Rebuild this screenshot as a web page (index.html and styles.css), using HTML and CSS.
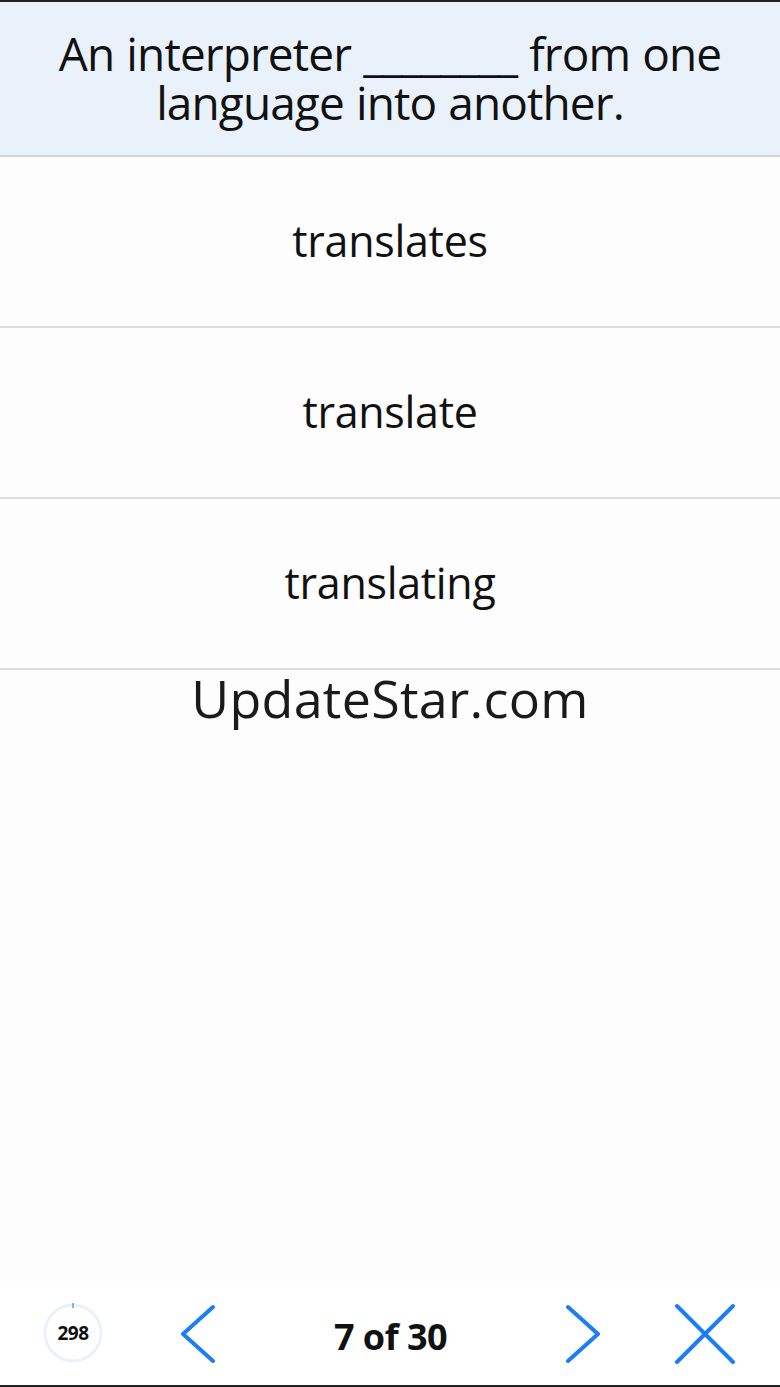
FILE: index.html
```html
<!DOCTYPE html>
<html>
<head>
<meta charset="utf-8">
<link rel="stylesheet" href="styles.css">
</head>
<body>
<div class="screen">
  <header class="question">
    <p>An interpreter ________ from one<br>language into another.</p>
  </header>
  <div class="options">
    <div class="option">translates</div>
    <div class="option">translate</div>
    <div class="option">translating</div>
  </div>
  <div class="content">
    <div class="watermark">UpdateStar.com</div>
  </div>
  <footer class="toolbar">
    <div class="timer">
      <svg class="ring" width="62" height="62" viewBox="0 0 62 62">
        <circle cx="31" cy="31" r="28" fill="none" stroke="#e9f1fb" stroke-width="3"/>
        <line x1="31" y1="1" x2="31" y2="6" stroke="#5b9be0" stroke-width="1.5"/>
      </svg>
      <span class="timer-num">298</span>
    </div>
    <svg class="nav prev" width="40" height="60" viewBox="0 0 40 60">
      <polyline points="34,4 4,31 34,58" fill="none" stroke="#1a7ff0" stroke-width="4" stroke-linecap="round" stroke-linejoin="round"/>
    </svg>
    <div class="counter">7 of 30</div>
    <svg class="nav next" width="40" height="60" viewBox="0 0 40 60">
      <polyline points="6,4 36,31 6,58" fill="none" stroke="#1a7ff0" stroke-width="4" stroke-linecap="round" stroke-linejoin="round"/>
    </svg>
    <svg class="close" width="62" height="62" viewBox="0 0 62 62">
      <path d="M4 4 L60 60 M60 4 L4 60" fill="none" stroke="#1a7ff0" stroke-width="4" stroke-linecap="round"/>
    </svg>
  </footer>
</div>
</body>
</html>
```
FILE: styles.css
```css
html, body {
  margin: 0;
  padding: 0;
  background: #fdfdfd;
}
.screen {
  width: 780px;
  height: 1387px;
  display: flex;
  flex-direction: column;
  border-top: 2px solid #222;
  border-bottom: 2px solid #222;
  box-sizing: border-box;
  background: #fdfdfd;
  font-family: "Open Sans", "Noto Sans", sans-serif;
  color: #111;
}
.question {
  height: 155px;
  background: #e9f1fb;
  border-bottom: 2px solid #cfd3d8;
  display: flex;
  align-items: center;
  justify-content: center;
  box-sizing: border-box;
  padding-bottom: 2px;
}
.question p {
  margin: 0;
  text-align: center;
  font-size: 46px;
  line-height: 49px;
  letter-spacing: -0.9px;
  word-spacing: 1px;
}
.option {
  height: 171px;
  border-bottom: 2px solid #dcdcdc;
  box-sizing: border-box;
  display: flex;
  align-items: center;
  justify-content: center;
  font-size: 43px;
  letter-spacing: -0.3px;
  padding-bottom: 2px;
}
.content {
  flex: 1;
  display: flex;
  justify-content: center;
}
.watermark {
  font-size: 52px;
  line-height: 60px;
  color: #1a1a1a;
  margin-top: -2px;
  letter-spacing: 0.3px;
}
.toolbar {
  height: 104px;
  background: #ffffff;
  display: flex;
  align-items: center;
  padding: 0 0 0 42px;
  box-sizing: border-box;
}
.timer {
  position: relative;
  width: 62px;
  height: 62px;
  display: flex;
  align-items: center;
  justify-content: center;
}
.ring {
  position: absolute;
  left: 0;
  top: 0;
}
.timer-num {
  position: relative;
  font-size: 19px;
  font-weight: 700;
  letter-spacing: -0.5px;
}
.nav.prev {
  margin-left: 75px;
}
.counter {
  width: 343px;
  text-align: center;
  font-size: 36px;
  font-weight: 700;
  letter-spacing: -0.5px;
  padding-top: 6px;
}
.close {
  margin-left: 71px;
}
```
